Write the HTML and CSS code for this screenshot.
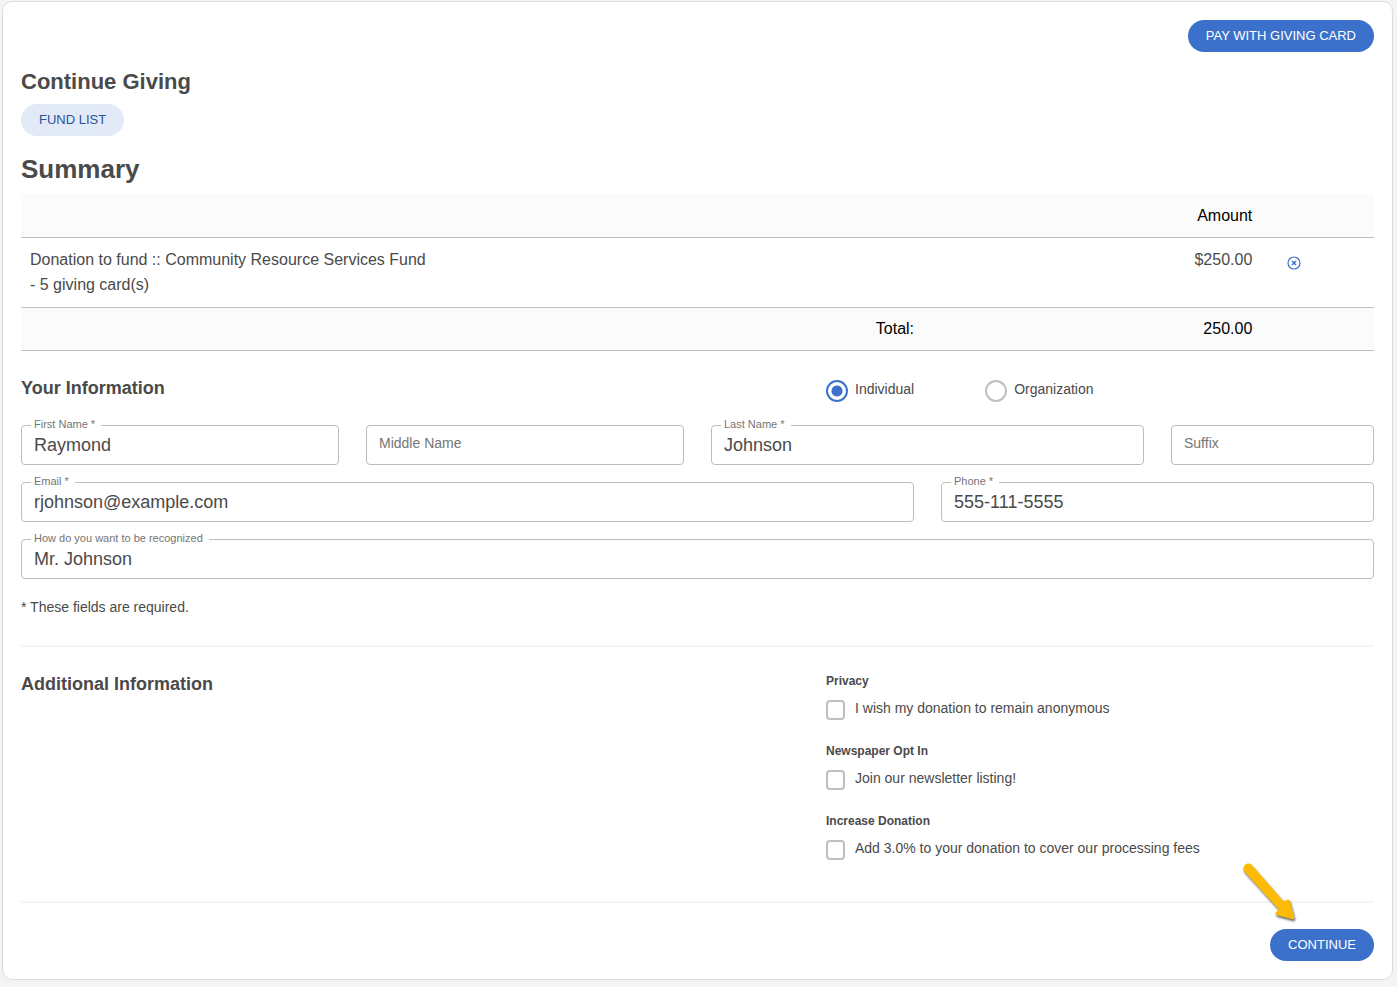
FILE: index.html
```html
<!DOCTYPE html>
<html lang="en">
<head>
<meta charset="utf-8">
<title>Continue Giving</title>
<meta name="viewport" content="width=device-width, initial-scale=1">
<link rel="stylesheet" href="styles.css">
</head>
<body>
<main class="card">
  <div class="actions">
    <button type="button" class="btn btn-primary">PAY WITH GIVING CARD</button>
  </div>
  <h1 class="page-title">Continue Giving</h1>
  <div class="nav"><button type="button" class="btn btn-light">FUND LIST</button></div>
  <h2 class="summary-title">Summary</h2>
  <table class="summary">
    <colgroup><col class="col-item"><col class="col-amount"><col class="col-remove"></colgroup>
    <thead>
      <tr><th></th><th class="num">Amount</th><th></th></tr>
    </thead>
    <tbody>
      <tr>
        <td>Donation to fund :: Community Resource Services Fund<br>- 5 giving card(s)</td>
        <td class="num">$250.00</td>
        <td>
          <button type="button" class="remove" aria-label="Remove">
            <svg width="14" height="14" viewBox="0 0 14 14" fill="none" stroke="currentColor"><circle cx="7" cy="7" r="6" stroke-width="1.2"/><path d="M5 5l4 4M9 5l-4 4" stroke-width="1.5"/></svg>
          </button>
        </td>
      </tr>
    </tbody>
    <tfoot>
      <tr><th class="num">Total:</th><th class="num">250.00</th><th></th></tr>
    </tfoot>
  </table>

  <form class="form">
    <section class="info">
      <div class="grid info-head">
        <h3 class="section-title span-7">Your Information</h3>
        <div class="span-5 radios">
          <label class="choice"><input class="radio" type="radio" name="kind" checked><span>Individual</span></label>
          <label class="choice"><input class="radio" type="radio" name="kind"><span>Organization</span></label>
        </div>
      </div>
      <div class="grid fields">
        <div class="field span-3"><input id="first" type="text" value="Raymond"><label for="first">First Name *</label></div>
        <div class="field span-3"><input id="middle" type="text" placeholder="Middle Name" aria-label="Middle Name"></div>
        <div class="field span-4"><input id="last" type="text" value="Johnson"><label for="last">Last Name *</label></div>
        <div class="field span-2"><input id="suffix" type="text" placeholder="Suffix" aria-label="Suffix"></div>
        <div class="field span-8"><input id="email" type="email" value="rjohnson@example.com"><label for="email">Email *</label></div>
        <div class="field span-4"><input id="phone" type="tel" value="555-111-5555"><label for="phone">Phone *</label></div>
        <div class="field span-12"><input id="recognized" type="text" value="Mr. Johnson"><label for="recognized">How do you want to be recognized</label></div>
      </div>
      <p class="note">* These fields are required.</p>
    </section>

    <section class="grid extra">
      <h3 class="section-title span-7">Additional Information</h3>
      <div class="span-5 options">
        <div class="option">
          <h4 class="option-title">Privacy</h4>
          <label class="choice"><input class="check" type="checkbox"><span>I wish my donation to remain anonymous</span></label>
        </div>
        <div class="option">
          <h4 class="option-title">Newspaper Opt In</h4>
          <label class="choice"><input class="check" type="checkbox"><span>Join our newsletter listing!</span></label>
        </div>
        <div class="option">
          <h4 class="option-title">Increase Donation</h4>
          <label class="choice"><input class="check" type="checkbox"><span>Add 3.0% to your donation to cover our processing fees</span></label>
        </div>
      </div>
    </section>

    <div class="actions footer">
      <button type="submit" class="btn btn-primary">CONTINUE</button>
      <svg class="pointer" width="64" height="66" viewBox="0 0 64 66" aria-hidden="true">
        <path d="M4.500 11.800A5 5 0 0 1 12.200 5.400L43.600 41.200L47.600 39.600Q49.400 39 49.900 41L54.200 57.500Q54.300 59.300 52.500 59.200L36.500 55Q34.300 53.800 36 52.300L38.800 49.500Z" fill="#fdbb05"/>
      </svg>
    </div>
  </form>
</main>
</body>
</html>
```
FILE: styles.css
```css
* { box-sizing: border-box; }

body {
  margin: 0;
  padding: 1px 4px 7px 2px;
  background: #f4f4f4;
  color: #4a4a4a;
  font: 14px/20px "Liberation Sans", Arial, sans-serif;
}

h1, h2, h3, h4, p { margin: 0; }

.card {
  padding: 18px;
  background: #fff;
  border: 1px solid #dcdcdc;
  border-radius: 10px;
}

.actions { display: flex; justify-content: flex-end; }

.btn {
  height: 32px;
  padding: 0 18px;
  border: 0;
  border-radius: 16px;
  font: inherit;
  font-size: 13px;
  cursor: pointer;
}
.btn-primary { background: #3b71ca; color: #fff; }
.btn-light { background: #e2eaf7; color: #2c5299; }

.page-title { margin-top: 14px; font-size: 22px; line-height: 32px; }
.nav { display: flex; margin-top: 6px; }
.summary-title { margin-top: 16px; font-size: 26px; line-height: 34px; }

.summary {
  width: 100%;
  margin-top: 8px;
  border-collapse: collapse;
  table-layout: fixed;
  font-size: 16px;
  line-height: 25px;
}
.col-item { width: 66.67%; }
.col-amount { width: 25%; }
.summary tr { border-bottom: 1px solid #bfbfbf; }
.summary th, .summary td {
  padding: 9px;
  text-align: left;
  vertical-align: top;
  font-weight: 400;
}
.summary td { padding-bottom: 10px; }
.summary th { background: #fbfbfb; color: #000; }
.summary tfoot th { padding-top: 8px; }
.summary .num { text-align: right; }

.remove {
  display: flex;
  padding: 9px 17px 0;
  border: 0;
  background: none;
  color: #3b71ca;
  cursor: pointer;
}

.grid {
  display: grid;
  grid-template-columns: repeat(12, minmax(0, 1fr));
  column-gap: 27px;
}
.span-2 { grid-column: span 2; }
.span-3 { grid-column: span 3; }
.span-4 { grid-column: span 4; }
.span-5 { grid-column: span 5; }
.span-7 { grid-column: span 7; }
.span-8 { grid-column: span 8; }
.span-12 { grid-column: span 12; }

.section-title { font-size: 18px; line-height: 24px; }

.info { padding: 25px 0 28px; border-bottom: 2px solid #f4f4f4; }
.radios { display: flex; gap: 71px; padding-top: 3px; }
.choice { display: flex; gap: 7px; cursor: pointer; }

.radio, .check {
  appearance: none;
  flex: none;
  margin: 0;
  border: 2px solid #bfbfbf;
  background: #fff;
}
.radio { width: 22px; height: 22px; margin-top: 1px; border-radius: 50%; }
.radio:checked {
  border-color: #3b71ca;
  background: radial-gradient(circle, #3b71ca 5px, #fff 6px);
}

.fields { margin-top: 23px; row-gap: 17px; }
.field { position: relative; }
.field input {
  display: block;
  width: 100%;
  height: 40px;
  padding: 1px 12px 0;
  border: 1px solid #bdbdbd;
  border-radius: 4px;
  background: #fff;
  color: #4a4a4a;
  font: inherit;
  font-size: 18px;
}
.field input::placeholder { color: #757575; font-size: 14px; }
.field input:placeholder-shown { padding: 0 12px 4px; font-size: 14px; }
.field label {
  position: absolute;
  top: -8px;
  left: 10px;
  padding: 0 6px 0 3px;
  background: #fff;
  color: #757575;
  font-size: 11px;
  line-height: 14px;
}
.note { margin-top: 18px; }

.extra { padding: 25px 0 41px; border-bottom: 2px solid #f4f4f4; }
.options { display: grid; gap: 22px; }
.option-title { font-size: 12px; line-height: 18px; }
.options .choice { gap: 10px; padding-top: 5px; }
.options .choice span { margin-top: 3px; }
.check { width: 19px; height: 20px; margin-top: 5px; border-radius: 4px; }

.footer { position: relative; padding-top: 26px; }
.pointer {
  position: absolute;
  right: 70px;
  bottom: 35px;
  overflow: visible;
  filter: drop-shadow(1px 2px 1px rgba(0, 0, 0, .6));
}
```
